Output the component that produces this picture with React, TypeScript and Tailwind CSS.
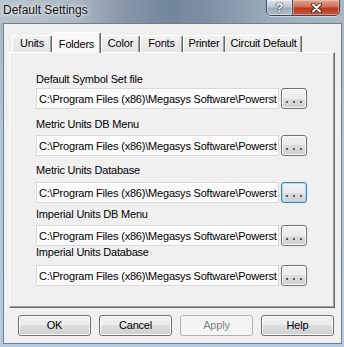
import React from "react";

const rows = [
  { label: "Default Symbol Set file", lmt: "mt-[20px]", fmt: "mt-[2px]", focus: false },
  { label: "Metric Units DB Menu", lmt: "mt-[9px]", fmt: "mt-[4px]", focus: false },
  { label: "Metric Units Database", lmt: "mt-[8px]", fmt: "mt-[5px]", focus: true },
  { label: "Imperial Units DB Menu", lmt: "mt-[5px]", fmt: "mt-[4px]", focus: false },
  { label: "Imperial Units Database", lmt: "mt-[0px]", fmt: "mt-[6px]", focus: false },
];

const tabs = [
  { name: "Units", w: "w-[40px]", sel: false },
  { name: "Folders", w: "w-[49px]", sel: true },
  { name: "Color", w: "w-[39px]", sel: false },
  { name: "Fonts", w: "w-[43px]", sel: false },
  { name: "Printer", w: "w-[42px]", sel: false },
  { name: "Circuit Default", w: "w-[77px]", sel: false },
];

const PATH = "C:\\Program Files (x86)\\Megasys Software\\Powerst";

function Dots() {
  return (
    <div className="flex items-end gap-[5px] pb-[5px]">
      <span className="block w-[2px] h-[2px] bg-[#5a5a5a]" />
      <span className="block w-[2px] h-[2px] bg-[#5a5a5a]" />
      <span className="block w-[2px] h-[2px] bg-[#5a5a5a]" />
    </div>
  );
}

function DialogButton({ label, disabled }: { label: string; disabled?: boolean }) {
  if (disabled) {
    return (
      <div className="w-[73px] h-[21px] rounded-[3px] border border-[#adb2b5] bg-[#f4f4f4] text-[#838383] text-center leading-[19px] text-[11px] tracking-[-0.2px]">
        {label}
      </div>
    );
  }
  return (
    <div className="w-[73px] h-[21px] rounded-[3px] border border-[#707070] bg-[linear-gradient(#f2f2f2_0%,#ebebeb_50%,#dddddd_50%,#cfcfcf_100%)] shadow-[inset_0_0_0_1px_#fcfcfc] text-black text-center leading-[19px] text-[11px] tracking-[-0.2px]">
      {label}
    </div>
  );
}

export default function App() {
  return (
    <div className="w-[344px] h-[347px] flex flex-col overflow-hidden bg-[linear-gradient(180deg,#a9b5c1_0%,#b3c4d6_40%,#b5cbe2_100%)] font-['Liberation_Sans',Arial,sans-serif]">
      {/* Title bar */}
      <div className="h-[23px] flex justify-between items-start bg-[linear-gradient(90deg,#b9c3cc_0%,#aab7c3_22%,#8797a8_36%,#72869a_50%,#8395a7_64%,#9aabbb_78%,#a9b7c4_100%)]">
        <div className="pl-[3px] pt-[2px] leading-[16px] text-[12px] text-[#111] [text-shadow:0_0_6px_rgba(255,255,255,0.9),0_0_3px_rgba(255,255,255,0.9)] whitespace-nowrap">
          Default Settings
        </div>
        <div className="flex mr-[4px] border border-t-0 border-[#3f4955] rounded-b-[5px] overflow-hidden shadow-[0_1px_0_rgba(255,255,255,0.5)]">
          <div className="w-[26px] h-[15px] flex items-center justify-center border-r border-[#3f4955] bg-[linear-gradient(#dfe5ec_0%,#bcc7d3_45%,#9dacbc_55%,#aebdcc_100%)] shadow-[inset_0_0_0_1px_rgba(255,255,255,0.45)]">
            <span className="text-white font-bold text-[12px] leading-[12px] [text-shadow:0_0_1px_#233,0_0_2px_#233]">?</span>
          </div>
          <div className="w-[46px] h-[15px] flex items-center justify-center bg-[linear-gradient(#e0a696_0%,#cf6d58_45%,#b8391f_55%,#c9573b_100%)] shadow-[inset_0_0_0_1px_rgba(255,220,210,0.45)]">
            <svg width="11" height="10" viewBox="0 0 11 10">
              <path d="M2 1.5 L9 8.5 M9 1.5 L2 8.5" stroke="#3a1a14" strokeWidth="3.6" strokeLinecap="round" />
              <path d="M2 1.5 L9 8.5 M9 1.5 L2 8.5" stroke="#ffffff" strokeWidth="2" strokeLinecap="round" />
            </svg>
          </div>
        </div>
      </div>

      {/* Client */}
      <div className="flex-1 ml-[3px] mr-[2px] mb-[3px] border border-[#6d7e8f] bg-[#f0f0f0] pt-[8px] text-[11px] tracking-[-0.2px] text-black">
        {/* Tabs */}
        <div className="h-[20px] flex items-end pl-[8px]">
          {tabs.map((t) =>
            t.sel ? (
              <div
                key={t.name}
                className={`${t.w} h-[21px] -mb-[1px] relative z-10 pt-[4px] leading-[15px] text-center rounded-t-[2px] border-l border-t border-white border-r border-r-[#696969] shadow-[inset_-1px_0_0_#a0a0a0] bg-[#f7f7f7] whitespace-nowrap`}
              >
                {t.name}
              </div>
            ) : (
              <div
                key={t.name}
                className={`${t.w} h-[17px] leading-[15px] text-center rounded-t-[2px] border-l border-t border-white border-r border-r-[#696969] shadow-[inset_-1px_0_0_#a0a0a0] bg-[linear-gradient(#f2f2f2,#e4e4e4)] whitespace-nowrap`}
              >
                {t.name}
              </div>
            )
          )}
        </div>

        {/* Panel */}
        <div className="ml-[5px] w-[326px] h-[256px] border-l border-t border-white border-r border-b border-r-[#696969] border-b-[#696969] shadow-[inset_-1px_-1px_0_#a0a0a0] bg-[#f0f0f0] pl-[26px] flex flex-col">
          {rows.map((r) => (
            <React.Fragment key={r.label}>
              <div className={`${r.lmt} h-[13px] leading-[13px] whitespace-nowrap`}>{r.label}</div>
              <div className={`${r.fmt} flex gap-[2px]`}>
                <div className="w-[243px] h-[21px] border border-[#d9d9d9] bg-[#fbfbfb] shadow-[inset_0_0_0_1px_#ffffff] pl-[2px] pt-[2px] leading-[17px] overflow-hidden whitespace-nowrap">
                  {PATH}
                </div>
                {r.focus ? (
                  <div className="w-[26px] h-[21px] rounded-[3px] border border-[#3c7fb1] bg-[linear-gradient(#f2f2f2_0%,#ebebeb_50%,#dddddd_50%,#cfcfcf_100%)] shadow-[inset_0_0_0_1px_#a9dbf6] flex justify-center">
                    <Dots />
                  </div>
                ) : (
                  <div className="w-[26px] h-[21px] rounded-[3px] border border-[#707070] bg-[linear-gradient(#f2f2f2_0%,#ebebeb_50%,#dddddd_50%,#cfcfcf_100%)] shadow-[inset_0_0_0_1px_#fcfcfc] flex justify-center">
                    <Dots />
                  </div>
                )}
              </div>
            </React.Fragment>
          ))}
        </div>

        {/* Buttons */}
        <div className="mt-[7px] pl-[14px] flex gap-[8px]">
          <DialogButton label="OK" />
          <DialogButton label="Cancel" />
          <DialogButton label="Apply" disabled />
          <DialogButton label="Help" />
        </div>
      </div>
    </div>
  );
}
